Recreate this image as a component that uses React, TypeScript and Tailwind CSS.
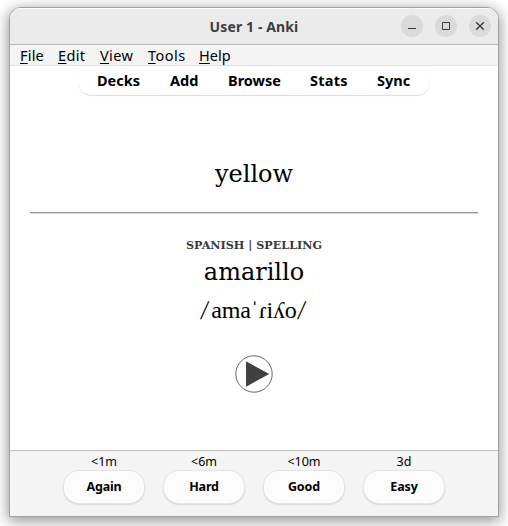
import React from 'react';

const menus = [
  { label: 'File', box: 'w-[38px] tracking-[0.2px]' },
  { label: 'Edit', box: 'w-[42px] tracking-[0.35px]' },
  { label: 'View', box: 'w-[48px] tracking-[0.35px]' },
  { label: 'Tools', box: 'w-[51px] tracking-[0.45px]' },
  { label: 'Help', box: 'w-[40px]' },
];

const links = [
  { label: 'Decks', box: 'w-[73px]' },
  { label: 'Add', box: 'w-[58px]' },
  { label: 'Browse', box: 'w-[82px]' },
  { label: 'Stats', box: 'w-[67px] tracking-[0.25px]' },
  { label: 'Sync', box: 'w-[34px]' },
];

const answers = [
  { time: '<1m', label: 'Again', tracking: 'tracking-[-0.2px]' },
  { time: '<6m', label: 'Hard', tracking: 'tracking-[-0.2px]' },
  { time: '<10m', label: 'Good', tracking: 'tracking-[-0.1px]' },
  { time: '3d', label: 'Easy', tracking: 'tracking-[-0.1px]' },
];

function WindowButton({ children, label }: { children: React.ReactNode; label: string }) {
  return (
    <button aria-label={label} className="flex size-[22px] items-center justify-center rounded-full bg-[#dadada]">
      <svg width="22" height="22" viewBox="0 0 22 22" fill="none" stroke="#3d3d3d">
        {children}
      </svg>
    </button>
  );
}

function TitleBar() {
  return (
    <header className="flex h-[37px] shrink-0 items-center border-b border-[#b9b9b9] bg-[#ebebeb] pr-[7px] shadow-[inset_0_1px_0_#fafafa]">
      <div className="w-[91px]" />
      <h1 className="flex-1 pl-[6px] pt-[2px] text-center text-[14px] font-bold leading-[20px] tracking-[0.12px] text-[#3d3d3d]">User 1 - Anki</h1>
      <div className="flex gap-3">
        <WindowButton label="Minimize"><path d="M7 13.5h8" /></WindowButton>
        <WindowButton label="Maximize"><path d="M7.5 7.5h7v7h-7z" /></WindowButton>
        <WindowButton label="Close"><path strokeWidth="1.4" d="M7.2 7.2l7.6 7.6M14.8 7.2l-7.6 7.6" /></WindowButton>
      </div>
    </header>
  );
}

export default function App() {
  return (
    <div className="h-[526px] w-[508px] overflow-hidden bg-white pl-[9px] pt-[7px] font-['Noto_Sans',sans-serif] text-black">
      <div className="flex h-[510px] w-[490px] flex-col overflow-hidden rounded-t-[12px] border border-[#a0a2a1] bg-white shadow-[0_3px_14px_1px_rgba(0,0,0,0.42)]">
        <TitleBar />
        <nav className="flex h-[21px] shrink-0 border-b border-[#e2e2e2] bg-[#f4f4f4] pl-[10px] text-[14.5px] leading-[20px]">
          {menus.map((m) => (
            <span key={m.label} className={m.box}>
              <span className="underline underline-offset-[2px] decoration-1">{m.label[0]}</span>
              {m.label.slice(1)}
            </span>
          ))}
        </nav>
        <main className="flex h-[384px] shrink-0 flex-col items-center">
          <nav className="flex h-[30px] w-[352px] rounded-b-[14px] border-b border-[#dedede] pl-[19px] text-[14.5px] font-bold leading-[29px] shadow-[0_0_1px_rgba(0,0,0,0.12)]">
            {links.map((l) => (
              <span key={l.label} className={l.box}>{l.label}</span>
            ))}
          </nav>
          <div className="mt-[62px] font-['DejaVu_Serif',serif] text-[24px] leading-[32px]">yellow</div>
          <hr className="mt-[22px] h-[2px] w-[448px] border-t border-b border-t-[#929292] border-b-[#dcdcdc]" />
          <div className="mt-[23px] font-['DejaVu_Serif',serif] text-[11.2px] font-bold leading-[16px] text-[#3b3b3b]">SPANISH | SPELLING</div>
          <div className="mt-[3px] font-['DejaVu_Serif',serif] text-[24px] leading-[32px]">amarillo</div>
          <div className="mt-[5px] flex h-[34px] whitespace-nowrap font-['Liberation_Serif',serif] text-[24px] leading-[34px]">
            <span className="w-[11px] -skew-x-6 pl-[1px] text-[27px]">/</span>
            <span className="flex w-[86px] justify-center tracking-[-0.15px]">amaˈɾiʎo</span>
            <span className="w-[11px] -skew-x-6 pl-[1px] text-[27px]">/</span>
          </div>
          <svg className="mt-[28px]" width="38" height="38" viewBox="0 0 38 38">
            <circle cx="19" cy="19" r="18.2" fill="white" stroke="#444" strokeWidth="0.8" />
            <path d="M11 6.3v25.4l23.3-12.7z" fill="#404040" />
          </svg>
        </main>
        <footer className="flex flex-1 justify-center gap-[18px] border-t border-[#bdbdbd] bg-[#f4f4f4]">
          {answers.map((a) => (
            <div key={a.label} className="flex w-[82px] flex-col items-center">
              <span className="h-[20px] text-[12.5px] leading-[21px]">{a.time}</span>
              <button className={`h-[32px] w-[80px] rounded-[15px] bg-[#fcfcfc] text-[12.5px] font-bold leading-[30px] shadow-[0_0_0_1px_#e5e5e5,0_1px_2px_#999] ${a.tracking}`}>{a.label}</button>
            </div>
          ))}
        </footer>
      </div>
    </div>
  );
}
